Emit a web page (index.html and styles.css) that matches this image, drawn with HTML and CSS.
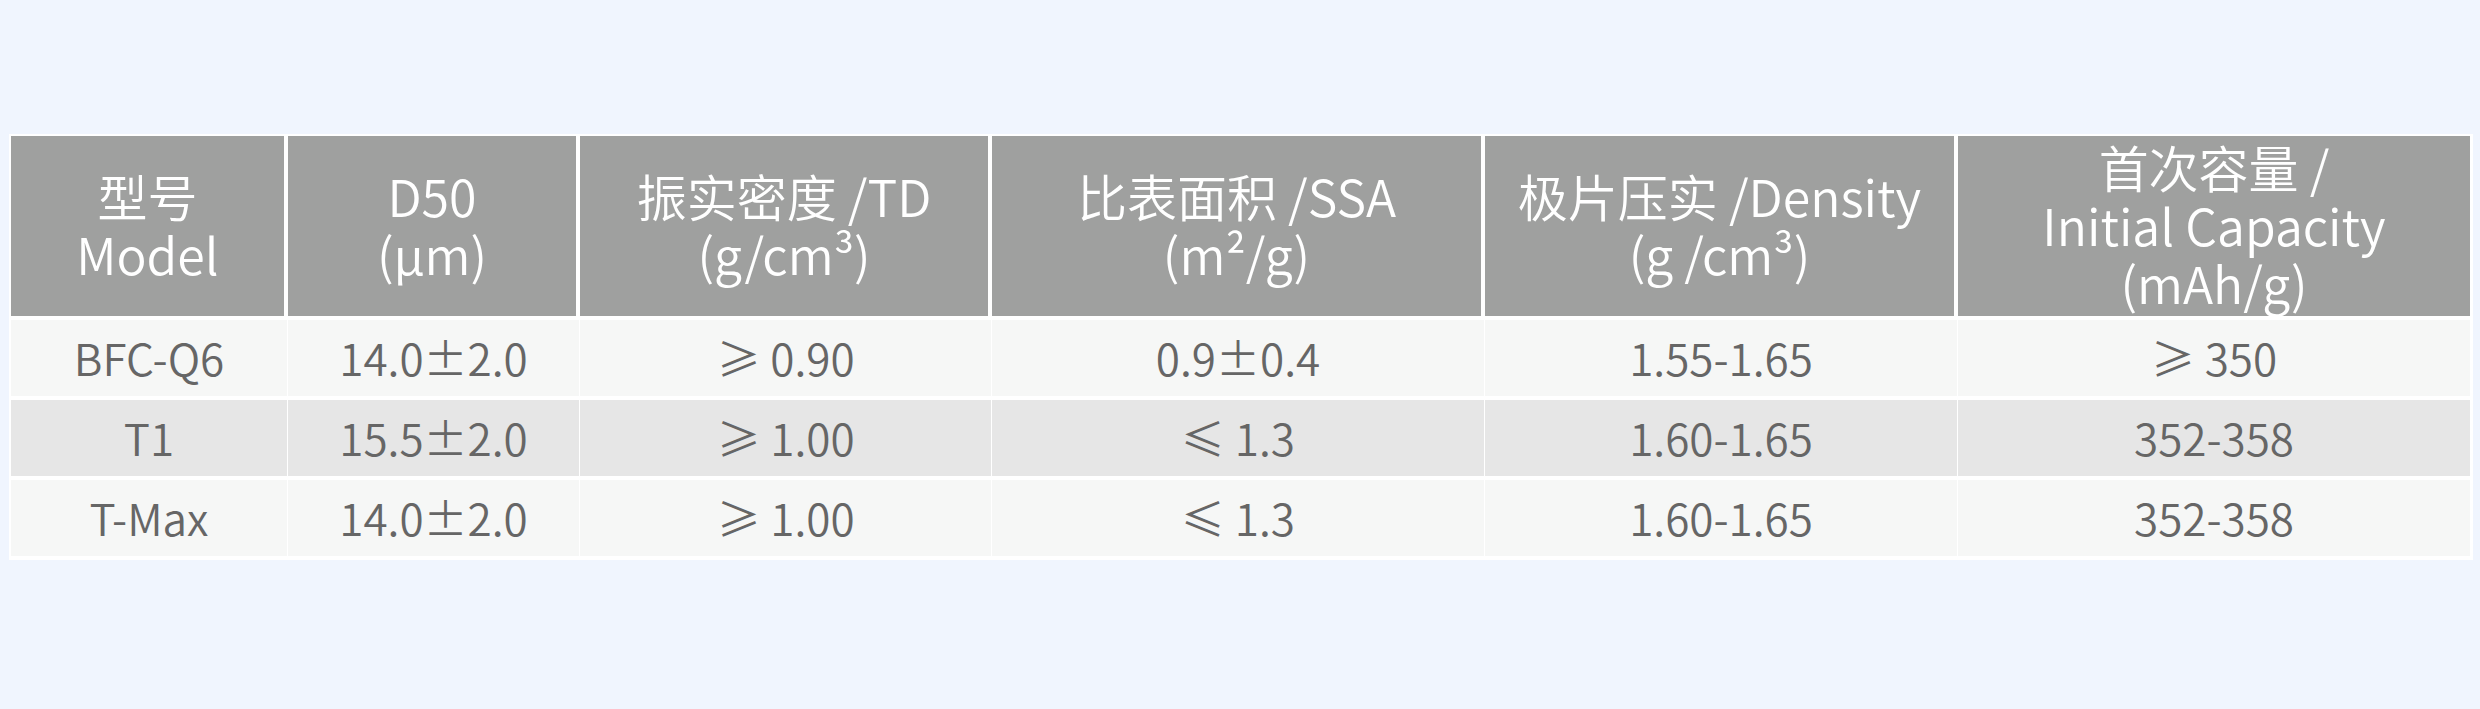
FILE: index.html
```html
<!DOCTYPE html>
<html lang="zh-CN">
<head>
<meta charset="utf-8">
<title>产品参数</title>
<link rel="stylesheet" href="styles.css">
</head>
<body>
<div class="page">
  <table class="spec">
    <colgroup>
      <col class="c1"><col class="c2"><col class="c3"><col class="c4"><col class="c5"><col class="c6">
    </colgroup>
    <thead>
      <tr>
        <th>型号<br>Model</th>
        <th>D50<br>(μm)</th>
        <th>振实密度 /TD<br>(g/cm³)</th>
        <th>比表面积 /SSA<br>(m²/g)</th>
        <th>极片压实 /Density<br>(g /cm³)</th>
        <th>首次容量 /<br>Initial Capacity<br>(mAh/g)</th>
      </tr>
    </thead>
    <tbody>
      <tr class="odd">
        <td>BFC-Q6</td><td>14.0±2.0</td><td>≥ 0.90</td><td>0.9±0.4</td><td>1.55-1.65</td><td>≥ 350</td>
      </tr>
      <tr class="even">
        <td>T1</td><td>15.5±2.0</td><td>≥ 1.00</td><td>≤ 1.3</td><td>1.60-1.65</td><td>352-358</td>
      </tr>
      <tr class="odd">
        <td>T-Max</td><td>14.0±2.0</td><td>≥ 1.00</td><td>≤ 1.3</td><td>1.60-1.65</td><td>352-358</td>
      </tr>
    </tbody>
  </table>
</div>
</body>
</html>
```
FILE: styles.css
```css
html, body {
  margin: 0;
  padding: 0;
  background: #f0f5fe;
}

.page {
  padding: 134px 0 0 9px;
  font-family: "Noto Sans CJK SC", "Noto Sans", sans-serif;
}

.spec {
  border-collapse: separate;
  border-spacing: 0;
  table-layout: fixed;
  width: 2464px;
  background: #ffffff;
  border-style: solid;
  border-color: #ffffff;
  border-width: 2px 3px 4px 2px;
}

.c1 { width: 277px; }
.c2 { width: 292px; }
.c3 { width: 412px; }
.c4 { width: 493px; }
.c5 { width: 473px; }
.c6 { width: 512px; }

.spec th {
  background: #9fa09f;
  color: #ffffff;
  font-weight: 350;
  font-size: 50px;
  line-height: 58px;
  height: 180px;
  padding: 0 0 4px 0;
  text-align: center;
  vertical-align: middle;
  border-right: 4px solid #ffffff;
  box-sizing: border-box;
}

.spec th:last-child {
  border-right: 0;
}

.spec td {
  color: #666666;
  font-weight: 350;
  font-size: 44px;
  line-height: 52px;
  height: 80px;
  padding: 0 0 2px 0;
  text-align: center;
  vertical-align: middle;
  border-top: 4px solid #ffffff;
  border-right: 1px solid #ffffff;
  box-sizing: border-box;
}

.spec td:last-child {
  border-right: 0;
}

.spec tr.odd td {
  background: #f6f7f6;
}

.spec tr.even td {
  background: #e6e6e6;
}
```
